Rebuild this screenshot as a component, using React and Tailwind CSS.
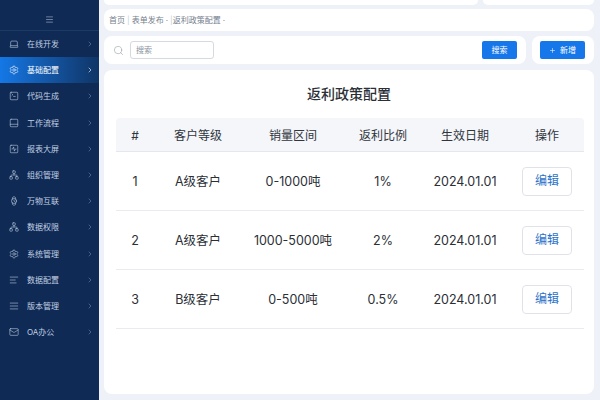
import React from "react";
import { ChevronRight, Menu, Search, Plus, Settings, SquareTerminal, Mail, Network, Watch, AlignLeft, AlignJustify, Laptop, PanelBottom, SquareActivity } from "lucide-react";

const menu = [
  ["在线开发", Laptop], ["基础配置", Settings], ["代码生成", SquareTerminal], ["工作流程", PanelBottom],
  ["报表大屏", SquareActivity], ["组织管理", Network], ["万物互联", Watch], ["数据权限", Network],
  ["系统管理", Settings], ["数据配置", AlignLeft], ["版本管理", AlignJustify], ["OA办公", Mail],
];
const rows = [
  ["1", "A级客户", "0-1000吨", "1%"],
  ["2", "A级客户", "1000-5000吨", "2%"],
  ["3", "B级客户", "0-500吨", "0.5%"],
];
const grid = "grid grid-cols-[38px_88px_102px_78px_86px_76px] items-center text-center";
const font = { fontFamily: '"Inter","Noto Sans CJK SC",sans-serif' };

export default function App() {
  return (
    <div style={font} className="flex h-[400px] w-[600px] overflow-hidden bg-[#eef2f8]">
      <aside className="flex w-[99px] shrink-0 flex-col bg-[#0e2a55] text-[#c3d0e2]">
        <div className="flex h-[31px] items-center justify-center border-b border-[#1c3a66] pt-2">
          <Menu size={9} strokeWidth={1.4} />
        </div>
        <nav className="flex flex-col">
          {menu.map(([label, Icon], i) => (
            <div key={label} className={`flex h-[26.2px] items-center pl-[9px] pr-[5px] ${i === 1 ? "bg-gradient-to-r from-[#1478e6] to-[#0f3566] text-white" : ""}`}>
              <Icon size={10} strokeWidth={1.4} className="shrink-0" />
              <span className="ml-[8px] flex-1 text-[8px] leading-none">{label}</span>
              <ChevronRight size={8} strokeWidth={1.8} className={i === 1 ? "text-white" : "text-[#7088a8]"} />
            </div>
          ))}
        </nav>
      </aside>

      <main className="flex h-[400px] min-w-0 flex-1 flex-col pl-[5px] pr-[6px]">
        <div className="flex h-[5px] shrink-0 gap-[5px]">
          <div className="w-[374px] rounded-b-lg bg-white" />
          <div className="flex-1 rounded-b-lg bg-white" />
        </div>
        <div className="mt-[4px] flex h-[22px] shrink-0 items-center gap-[2px] rounded-lg bg-white pl-[5px] text-[8px] leading-none text-[#75808e]">
          <span>首页</span><span className="text-[#c8ced6]">|</span><span>表单发布</span><span>·</span><span className="text-[#c8ced6]">|</span><span className="ml-[-2px]">返利政策配置</span><span>·</span>
        </div>
        <div className="mt-[5px] flex h-[28px] shrink-0 gap-[6px]">
          <div className="flex flex-1 items-center rounded-lg bg-white pl-[9px] pr-[9px]">
            <Search size={11} strokeWidth={1.2} className="text-[#8f99a6]" />
            <div className="ml-[6px] flex h-[18px] w-[84px] items-center rounded-[3px] border border-[#d5dae1] pl-[5px] text-[8px] text-[#8a93a0]">搜索</div>
            <button className="ml-auto h-[18px] w-[35px] rounded-[2px] bg-[#1677ea] text-[8px] text-white">搜索</button>
          </div>
          <div className="flex w-[62px] items-center rounded-lg bg-white pl-[8px]">
            <button className="flex h-[18px] w-[45px] items-center justify-center gap-[4px] rounded-[2px] bg-[#1677ea] text-[8px] text-white">
              <Plus size={7} strokeWidth={1.8} />新增
            </button>
          </div>
        </div>
        <section className="mt-[6px] h-[324px] shrink-0 rounded-lg bg-white px-[12px]">
          <h1 className="pt-[12px] text-center text-[14px] font-medium leading-[24px] text-[#2b2f36]">返利政策配置</h1>
          <div className={`${grid} mt-[12px] h-[34px] w-[468px] rounded-t-sm border-b border-[#e4e8ee] bg-[#f4f6fa] pt-[2px] text-[12px] text-[#30353c]`}>
            <span>#</span><span>客户等级</span><span>销量区间</span><span>返利比例</span><span>生效日期</span><span className="pl-[2px]">操作</span>
          </div>
          {rows.map((r) => (
            <div key={r[0]} className={`${grid} h-[59px] w-[468px] border-b border-[#e8ebf0] text-[12.5px] text-[#2b2f36]`}>
              <span className="pt-[2px]">{r[0]}</span><span className="pt-[2px]">{r[1]}</span><span className="pt-[2px]">{r[2]}</span><span className="pt-[2px]">{r[3]}</span><span className="pt-[2px]">2024.01.01</span>
              <span className="flex pl-[14px]">
                <button className="h-[29px] w-[50px] shrink-0 rounded-[4px] border border-[#dfe3e9] bg-white text-[12px] text-[#2a72c8]">编辑</button>
              </span>
            </div>
          ))}
        </section>
      </main>
    </div>
  );
}
